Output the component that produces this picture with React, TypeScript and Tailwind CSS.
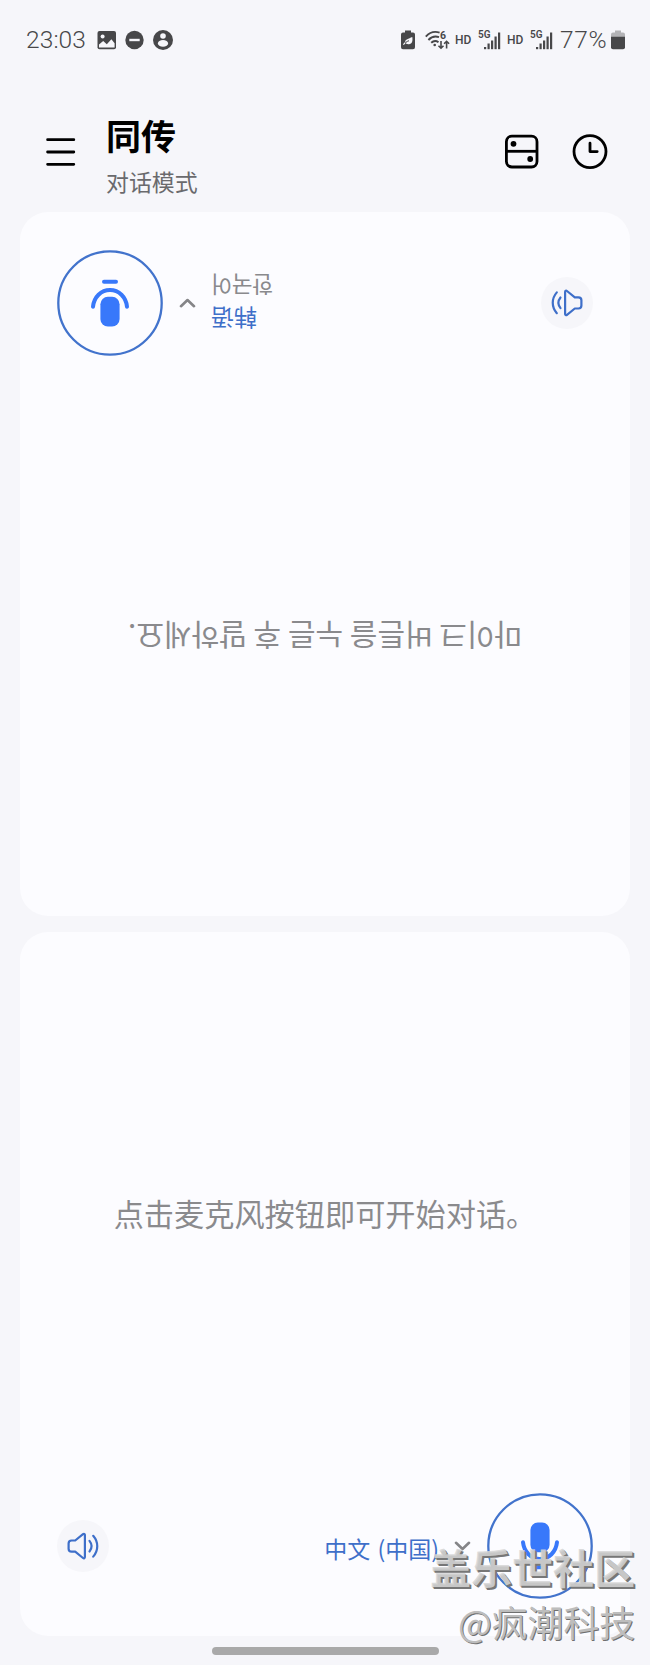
import React from 'react';

interface ConversationCardProps {
  message: string;
  messageClass: string;
  language: React.ReactNode;
  flipped?: boolean;
}

const ImageIcon = () => (
  <svg className="w-[19px] h-[20px]" viewBox="0 0 19 20">
    <rect x="0.5" y="1" width="18.5" height="18.2" rx="2" fill="#474749" />
    <circle cx="5.6" cy="6.4" r="2" fill="#f6f6fa" />
    <path d="M2 14.5 6.2 11l3.6 3.2 4.6-5 3.2 4V17.6H2z" fill="#f6f6fa" />
  </svg>
);

const MinusCircleIcon = () => (
  <svg className="w-[19px] h-[20px]" viewBox="0 0 19 20">
    <circle cx="9.5" cy="10" r="9.2" fill="#474749" />
    <path d="M4.3 10h10.4" stroke="#f6f6fa" strokeWidth="2.4" />
  </svg>
);

const PersonIcon = () => (
  <svg className="w-[20px] h-[20px]" viewBox="0 0 20 20">
    <circle cx="10" cy="10" r="10" fill="#474749" />
    <circle cx="10" cy="6" r="2.8" fill="#f6f6fa" />
    <ellipse cx="10" cy="13.4" rx="5.1" ry="3.3" fill="#f6f6fa" />
  </svg>
);

const BatterySaverIcon = () => (
  <svg className="w-[14px] h-[20px]" viewBox="0 0 14 20">
    <path d="M4 .6h6v2h2a2 2 0 0 1 2 2v12.6a2 2 0 0 1-2 2H2a2 2 0 0 1-2-2V4.6a2 2 0 0 1 2-2h2z" fill="#474749" />
    <path d="M11.3 7c.6 4.2-.2 7-3.3 7.3-2 .2-3.5-.6-3.7-2.2C4 9.2 7.5 8.8 11.3 7z" fill="#f6f6fa" />
    <path d="M2.6 15.2c1.3-2.4 3-3.7 5.4-4.5" stroke="#474749" strokeWidth="1" fill="none" />
    <path d="M2.4 14.6l1.8-2" stroke="#f6f6fa" strokeWidth="1.2" />
  </svg>
);

const WifiIcon = () => (
  <svg className="w-[25px] h-[20px]" viewBox="0 0 25 20" fill="none" stroke="#474749" strokeWidth="1.9">
    <path d="M.8 6.6C4.5 2.5 10 1.1 14.6 2.6" />
    <path d="M3.4 10C6.5 6.7 10.5 6 14 7.2" />
    <path d="M6.2 12.8c2.2-2.1 5-2.3 7.3-.6" />
    <circle cx="9.7" cy="15" r="1.3" fill="#474749" stroke="none" />
    <path d="M16 11v7M13.5 15.7l2.5 2.5 2.5-2.5M21.6 18.5v-7M19.1 13.8l2.5-2.5 2.5 2.5" strokeWidth="1.6" />
    <text x="15" y="8.6" fill="#474749" stroke="none" className="font-['Roboto',sans-serif] text-[10.5px] font-bold">6</text>
  </svg>
);

const SignalIcon = () => (
  <svg className="w-[23px] h-[20px]" viewBox="0 0 23 20" fill="#474749">
    <text x="0" y="8.3" className="font-['Roboto',sans-serif] text-[10px] font-semibold">5G</text>
    <rect x="6" y="17" width="2.2" height="2.2" />
    <rect x="9.5" y="13.5" width="2.2" height="5.7" />
    <rect x="13" y="10.5" width="2.2" height="8.7" />
    <rect x="16.5" y="6.5" width="2.2" height="12.7" />
    <rect x="20" y="2.5" width="2.2" height="16.7" />
  </svg>
);

const BatteryIcon = () => (
  <svg className="w-[14px] h-[20px]" viewBox="0 0 14 20">
    <path d="M4 .6h6v2h2a2 2 0 0 1 2 2V7H0V4.6a2 2 0 0 1 2-2h2z" fill="#b3b3b6" />
    <path d="M0 6.8h14v10.4a2 2 0 0 1-2 2H2a2 2 0 0 1-2-2z" fill="#474749" />
  </svg>
);

const StatusBar = () => (
  <div className="h-20 pl-[26px] pr-[25px] flex items-center text-[#474749] font-['Roboto',sans-serif]">
    <span className="w-[71px] text-[24.5px] leading-none font-[360] tracking-[0.1px]">23:03</span>
    <div className="flex items-center gap-[9px]">
      <ImageIcon />
      <MinusCircleIcon />
      <PersonIcon />
    </div>
    <div className="ml-auto flex items-center">
      <BatterySaverIcon />
      <span className="w-[10px]" />
      <WifiIcon />
      <span className="ml-[5px] w-[23px] text-[12px] font-medium leading-none">HD</span>
      <SignalIcon />
      <span className="ml-[6px] w-[23px] text-[12px] font-medium leading-none">HD</span>
      <SignalIcon />
      <span className="ml-[7px] w-[51px] text-[24.5px] leading-none font-[360] tracking-[0.6px]">77%</span>
      <BatteryIcon />
    </div>
  </div>
);

const Header = () => (
  <header className="h-[132px] pt-[12px] pl-[46px] pr-[42px] flex items-center">
    <svg className="w-[30px] h-[30px]" viewBox="0 0 30 30" stroke="#000" strokeWidth="2.8" strokeLinecap="round">
      <path d="M1.6 2.7h26.2M1.6 15h26.2M1.6 27.3h26.2" />
    </svg>
    <div className="ml-[30px] h-[90px] pt-[6px]">
      <h1 className="text-[35px] leading-[44px] font-bold text-black">同传</h1>
      <p className="mt-[8px] text-[22.9px] leading-[32px] text-[#6a6a6d]">对话模式</p>
    </div>
    <div className="ml-auto flex gap-8">
      <svg className="w-9 h-9" viewBox="0 0 36 36" fill="none" stroke="#000" strokeWidth="2.8">
        <rect x="2.4" y="2.2" width="30.6" height="30.8" rx="5.5" />
        <path d="M2.4 17.3h30.6" />
        <circle cx="9.5" cy="9.8" r="2.9" fill="#000" stroke="none" />
        <circle cx="26.2" cy="25" r="2.9" fill="#000" stroke="none" />
      </svg>
      <svg className="w-9 h-9" viewBox="0 0 36 36" fill="none" stroke="#000" strokeWidth="2.8" strokeLinecap="round" strokeLinejoin="round">
        <circle cx="18" cy="17.6" r="16" />
        <path d="M18 9.2v8.4h7.2" />
      </svg>
    </div>
  </header>
);

const SpeakerButton = () => (
  <button className="w-[52px] h-[52px] rounded-full bg-[#f6f6fa]">
    <svg viewBox="0 0 52 52" fill="none" stroke="#3e6fc9" strokeWidth="2.2" strokeLinecap="round" strokeLinejoin="round">
      <path d="M14.6 20.5h3.6l7.8-6.3c.9-.7 1.900-.3 1.900.9v22c0 1.200-1 1.600-1.900.9l-7.800-6.300h-3.600c-1.700 0-3-1.300-3-3v-5.200c0-1.700 1.300-3 3-3z" />
      <path d="M32.5 20.9c2.7 3.4 2.7 7.2 0 10.6" />
      <path d="M36.2 15.8c5.4 6.2 5.400 14.600 0 20.800" />
    </svg>
  </button>
);

const MicButton = () => (
  <button className="w-[106px] h-[106px]">
    <svg viewBox="0 0 106 106" fill="none" stroke="#3878fa">
      <circle cx="53" cy="53" r="51.7" stroke="#4273cc" strokeWidth="2.3" />
      <rect x="43.4" y="29.6" width="19.2" height="29.6" rx="7.5" fill="#3878fa" stroke="none" />
      <path d="M36 49.3c1 9.5 8 16.7 17 16.7s16-7.2 17-16.7" strokeWidth="4" strokeLinecap="round" />
      <path d="M47 74.3h12" strokeWidth="4" strokeLinecap="round" />
    </svg>
  </button>
);

const ConversationCard: React.FC<ConversationCardProps> = ({ message, messageClass, language, flipped }) => (
  <section
    className={`h-[704px] mx-5 rounded-[28px] bg-[#fcfcff] flex flex-col ${flipped ? 'rotate-180' : ''}`}
  >
    <div className="flex-1 flex items-center justify-center">
      <p className={`text-[#8a8a8d] whitespace-nowrap ${messageClass}`}>{message}</p>
    </div>
    <div className={`h-[143px] px-[37px] flex items-center ${flipped ? 'pb-[39px]' : 'pb-[37px]'}`}>
      <SpeakerButton />
      <div className="ml-auto text-right">{language}</div>
      <svg className="ml-[15px] mr-[16px] w-[17px] h-[10px]" viewBox="0 0 17 10" fill="none" stroke="#858588" strokeWidth="2.6" strokeLinecap="round" strokeLinejoin="round">
        <path d="M2 1.8l6.5 6.2L15 1.8" />
      </svg>
      <MicButton />
    </div>
  </section>
);

const Watermark = () => (
  <div className="absolute right-[15px] bottom-0 h-[125px] text-right whitespace-nowrap">
    <div className="text-[41px] leading-[52px] font-bold text-[#d6d6d6]/85 [text-shadow:1px_1px_0_#77777799,2px_2px_0_#777777]">
      盖乐世社区
    </div>
    <div className="mt-[3px] text-[35.8px] leading-[52px] text-[#bdbdbd] [text-shadow:1px_1px_0_#6f6f6f]">@疯潮科技</div>
  </div>
);

export default function App() {
  return (
    <div className="relative w-[650px] h-[1665px] overflow-hidden bg-[#f6f6fa] font-['Noto_Sans_CJK_SC',sans-serif]">
      <StatusBar />
      <Header />
      <main className="flex flex-col gap-4">
        <ConversationCard
          flipped
          message="마이크 버튼을 누른 후 말하세요."
          messageClass="font-['Noto_Sans_CJK_KR',sans-serif] text-[30px] pb-[3px]"
          language={
            <>
              <p className="text-[23px] leading-[32px] text-[#3e6fc9]">韩语</p>
              <p className="pt-px font-['Noto_Sans_CJK_KR',sans-serif] text-[22.5px] leading-[32px] text-[#8a8a8d]">한국어</p>
            </>
          }
        />
        <ConversationCard
          message="点击麦克风按钮即可开始对话。"
          messageClass="text-[30.2px] pt-[2px]"
          language={<p className="pt-[3px] text-[23px] leading-[32px] [word-spacing:2px] text-[#3e6fc9]">中文 (中国)</p>}
        />
      </main>
      <div className="mt-[11px] mx-auto w-[227px] h-2 rounded-full bg-[#a9a9a9]" />
      <Watermark />
    </div>
  );
}
